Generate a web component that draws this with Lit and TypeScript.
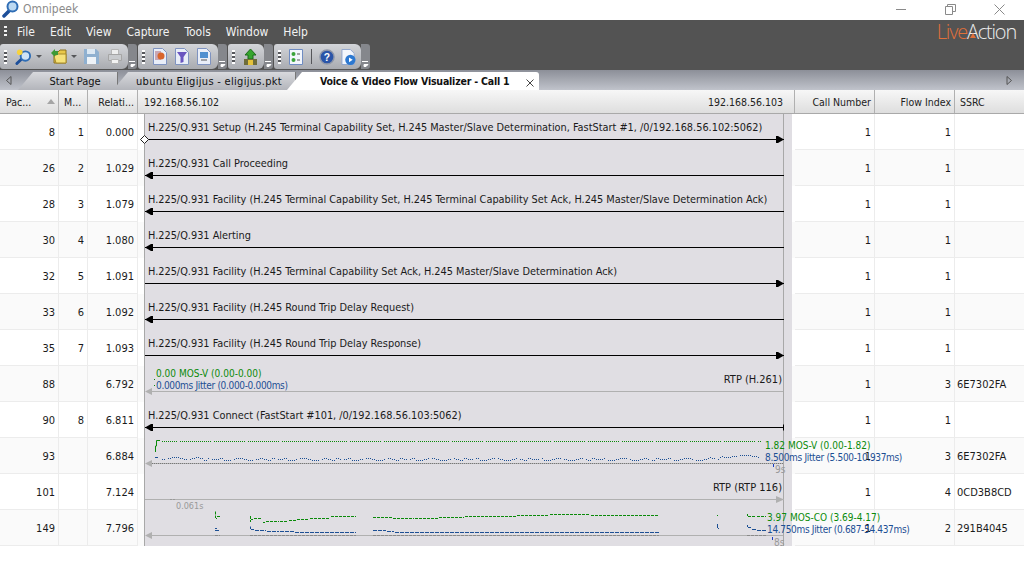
import { LitElement, html, css, svg } from "lit";
import { customElement } from "lit/decorators.js";

type Flow = {
  pkt: number;
  msg?: number;
  rel: string;
  call: string;
  idx: number;
  ssrc?: string;
  label?: string;
  dir?: "right" | "left";
  kind?: "rtp" | "rtpRight" | "chartV" | "chartA";
};

const ROWS: Flow[] = [
  { pkt: 8, msg: 1, rel: "0.000", call: "1", idx: 1, dir: "right", label: "H.225/Q.931 Setup (H.245 Terminal Capability Set, H.245 Master/Slave Determination, FastStart #1, /0/192.168.56.102:5062)" },
  { pkt: 26, msg: 2, rel: "1.029", call: "1", idx: 1, dir: "left", label: "H.225/Q.931 Call Proceeding" },
  { pkt: 28, msg: 3, rel: "1.079", call: "1", idx: 1, dir: "left", label: "H.225/Q.931 Facility (H.245 Terminal Capability Set, H.245 Terminal Capability Set Ack, H.245 Master/Slave Determination Ack)" },
  { pkt: 30, msg: 4, rel: "1.080", call: "1", idx: 1, dir: "left", label: "H.225/Q.931 Alerting" },
  { pkt: 32, msg: 5, rel: "1.091", call: "1", idx: 1, dir: "right", label: "H.225/Q.931 Facility (H.245 Terminal Capability Set Ack, H.245 Master/Slave Determination Ack)" },
  { pkt: 33, msg: 6, rel: "1.092", call: "1", idx: 1, dir: "left", label: "H.225/Q.931 Facility (H.245 Round Trip Delay Request)" },
  { pkt: 35, msg: 7, rel: "1.093", call: "1", idx: 1, dir: "right", label: "H.225/Q.931 Facility (H.245 Round Trip Delay Response)" },
  { pkt: 88, rel: "6.792", call: "1", idx: 3, ssrc: "6E7302FA", kind: "rtp" },
  { pkt: 90, msg: 8, rel: "6.811", call: "1", idx: 1, dir: "left", label: "H.225/Q.931 Connect (FastStart #101, /0/192.168.56.103:5062)" },
  { pkt: 93, rel: "6.884", call: "1", idx: 3, ssrc: "6E7302FA", kind: "chartV" },
  { pkt: 101, rel: "7.124", call: "1", idx: 4, ssrc: "0CD3B8CD", kind: "rtpRight" },
  { pkt: 149, rel: "7.796", call: "1", idx: 2, ssrc: "291B4045", kind: "chartA" },
];

// the wobble of the jitter trace, repeated along the lane
const WOBBLE = [20, 21, 21, 20, 22, 22, 21, 20, 20, 21, 22, 22, 21, 20, 21, 22];

const dottedV = () => {
  let green = "";
  let blue = "";
  for (let x = 18; x < 618; x += 2) {
    if (x % 34 !== 0) green += `M${x} 3.5h1`;
    let by = WOBBLE[(x >> 2) % WOBBLE.length];
    if (x < 60) by -= 1;
    if (x > 585) by = 19 - Math.round(Math.sin((x - 585) / 10) * 2);
    else if (x > 560) by -= Math.round((x - 560) / 12);
    if (x % 22 !== 0) blue += `M${x} ${by + 0.5}h1`;
  }
  return svg`<svg class="chart" width="650" height="36" viewBox="0 0 650 36">
    <path d="M11.5 14V8H12.5V2.5H16" fill="none" stroke="#0a8a0a"/>
    <path d="${green}" stroke="#0a8a0a" fill="none"/>
    <path d="M11 19.5h3" stroke="#1c4f94" fill="none"/>
    <path d="${blue}" stroke="#1c4f94" fill="none"/>
    <path d="M8 25.5H639" stroke="#b5b5b5" fill="none"/>
    <path d="M8 25.5H639" stroke="#777" stroke-dasharray="1 1" fill="none"/>
    <path d="M1 25.5L8 22V29Z" fill="#b0b0b0"/>
    <path d="M629.5 26v3" stroke="#1a3fc4" fill="none"/>
  </svg>`;
};

const GREEN_SEGS = [
  "M71.5 1.5V8M72 8.5H73M73 6.5H76",
  "M106.5 6V12M107 9.5H109M110 8.5H118M119 12.5H121M122 11.5H135M136 11.5H144M145 10.5H152M153 9.5H165M166 8.5H186M187 6.5H212",
  "M229 7.5H248M249 8.5H270M271 8.5H294M295 7.5H320M321 6.5H372M373 5.5H405M406 4.5H446M447 5.5H515",
  "M573.5 5V6M603.5 4V6M604 6.5H612M613 6.5H622",
];
const BLUE_SEGS = [
  "M71 18.5H73M71 20.5H76",
  "M106.5 16.5V19M107 19.5H110M111 20.5H122M123 21.5H135M136 21.5H150M151 22.5H212",
  "M229 20.5H242M243 21.5H250M251 22.5H290M291 22.5H515",
  "M573.5 14V18M574.5 18V19M603.5 15V17M604 17.5H607M608 19.5H612M613 20.5H622",
];

const segsA = () => svg`<svg class="chart" width="650" height="36" viewBox="0 0 650 36">
  <path d="M8 25.5H639" stroke="#b0b0b0" fill="none"/>
  <path d="M1 25.5L8 22V29Z" fill="#b0b0b0"/>
  <path d="M71 25.5H76M106 25.5H212M229 25.5H515M603 25.5H622" stroke="#8a8a8a" stroke-dasharray="3 1" fill="none"/>
  <path d="${GREEN_SEGS.join("")}" stroke="#0a8a0a" stroke-dasharray="3 1" fill="none"/>
  <path d="${BLUE_SEGS.join("")}" stroke="#1c4f94" stroke-dasharray="4 1" fill="none"/>
  <path d="M628.5 27v3" stroke="#1a3fc4" fill="none"/>
</svg>`;

const arrow = (dir?: "right" | "left", first = false, tick = false) => {
  const head =
    dir === "right"
      ? svg`<path d="M632 22V29H634L640 25.5L634 22Z" fill="#000"/>`
      : svg`<path d="M1 25.5L7 22H9V29H7Z" fill="#000"/>`;
  return svg`<svg class="chart" width="650" height="36" viewBox="0 0 650 36">
    <path d="M1 25.5H640" stroke="#000" fill="none"/>
    ${head}
    ${first ? svg`<path d="M-3.5 25.5L0.5 21.5L4.5 25.5L0.5 29.5Z" fill="#fff" stroke="#222"/>` : null}
    ${tick ? svg`<path d="M639.5 22.5V28.5" stroke="#000" fill="none"/>` : null}
  </svg>`;
};

@customElement("app-root")
export class AppRoot extends LitElement {
  static override styles = css`
    :host {
      display: block;
      width: 1024px;
      height: 574px;
      overflow: hidden;
      background: #fff;
      font-family: "DejaVu Sans Condensed", "DejaVu Sans", "Liberation Sans", sans-serif;
      font-stretch: condensed;
      font-size: 11px;
      color: #1a1a1a;
    }
    .title {
      height: 20px;
      display: flex;
      align-items: center;
      background: #fff;
      padding: 0 2px 2px 2px;
      box-sizing: border-box;
      gap: 4px;
      color: #8b8b8b;
      font-size: 12px;
    }
    .title .spacer {
      flex: 1;
    }
    .winbtn {
      width: 45px;
      height: 14px;
      display: flex;
      align-items: center;
      justify-content: center;
    }
    .chrome {
      height: 50px;
      background: #535353;
      display: flex;
      flex-direction: column;
      position: relative;
    }
    .menu {
      height: 24px;
      display: flex;
      align-items: center;
      color: #f2f2f2;
      padding-left: 4px;
    }
    .menu span {
      margin-right: 15px;
      font-size: 12px;
    }
    .menu .grip {
      margin-right: 10px;
      height: 12px;
    }
    .grip {
      width: 3px;
      flex: none;
      background: repeating-linear-gradient(#f2f2f2 0 2px, transparent 2px 4px);
    }
    .logo {
      position: absolute;
      right: 8px;
      top: -2px;
      font-size: 20px;
      letter-spacing: -1.2px;
      font-family: "Open Sans", "Noto Sans", sans-serif;
      font-stretch: normal;
      font-weight: 300;
      color: #ececec;
    }
    .logo b {
      font-weight: 300;
      color: #e0703a;
    }
    .logo-mark {
      position: absolute;
      left: 970px;
      top: 13px;
    }
    .tools {
      display: flex;
      height: 26px;
    }
    .group {
      display: flex;
      align-items: center;
      height: 25px;
      padding-left: 4px;
      border-radius: 3px 6px 6px 3px;
      background: linear-gradient(#d3d5d9, #a9abb0);
      box-sizing: border-box;
    }
    .group .grip {
      height: 14px;
      margin-right: 8px;
      background: repeating-linear-gradient(#fff 0 2px, #55565a 2px 4px);
    }
    .more {
      width: 9px;
      height: 25px;
      margin-right: 1px;
      background: #85878c;
      border-radius: 0 3px 3px 0;
      display: flex;
      align-items: flex-end;
      justify-content: center;
      padding-bottom: 2px;
      box-sizing: border-box;
    }
    .tbtn {
      display: flex;
      align-items: center;
    }
    .drop {
      margin: 0 7px 0 4px;
      width: 0;
      height: 0;
      border: 3px solid transparent;
      border-top: 3px solid #55565a;
      border-bottom: none;
    }
    .sep {
      width: 1px;
      height: 15px;
      background: #55565a;
      margin-right: 7px;
    }
    .gap8 {
      margin-right: 8px;
      flex: none;
    }
    .tabs {
      height: 20px;
      display: flex;
      align-items: flex-end;
      background: linear-gradient(#8c8f98, #c0c3cb);
      position: relative;
      box-sizing: border-box;
    }
    .scroll {
      width: 18px;
      height: 20px;
      display: flex;
      align-items: center;
      padding-left: 6px;
      box-sizing: border-box;
      flex: none;
    }
    .scroll.right {
      margin-left: auto;
      width: 24px;
    }
    .tab {
      height: 18px;
      display: flex;
      align-items: center;
      justify-content: center;
      clip-path: polygon(0 100%, 15px 0, 100% 0, 100% 100%);
      background: linear-gradient(#d8d9dd, #b3b5bb);
      border-right: 1px solid #777;
      box-sizing: border-box;
      color: #111;
    }
    .tab.start {
      width: 100px;
      margin-right: -5px;
      padding-left: 15px;
    }
    .tab.pkt {
      width: 183px;
      margin-right: -9px;
      padding-left: 10px;
      letter-spacing: 0.3px;
    }
    .tab.active {
      width: 252px;
      background: #fff;
      font-weight: 700;
      font-size: 10.5px;
      letter-spacing: -0.2px;
      border: none;
      position: relative;
      justify-content: flex-start;
      padding-left: 33px;
      border-top-right-radius: 3px;
      clip-path: polygon(0 100%, 15px 0, 100% 0, 100% 100%);
    }
    .tab .close {
      position: absolute;
      right: 5px;
      top: 7px;
    }
    .head,
    .row {
      display: grid;
      grid-template-columns: 59px 29px 50px 657px 80px 80px 69px;
    }
    .head {
      height: 24px;
      background: linear-gradient(#f7f7f7, #dedede);
      border-bottom: 1px solid #a9a9a9;
      box-sizing: border-box;
      font-size: 10.5px;
      color: #222;
    }
    .head > div {
      border-right: 1px solid #b0b0b0;
      display: flex;
      align-items: center;
      padding: 0 5px;
      box-sizing: border-box;
      overflow: hidden;
      white-space: nowrap;
    }
    .head > div:last-child {
      border-right: none;
    }
    .head .pac {
      justify-content: space-between;
      padding: 0 3px 0 6px;
    }
    .head .sort {
      width: 0;
      height: 0;
      border: 4.5px solid transparent;
      border-bottom: 5px solid #a5a5a5;
      border-top: none;
    }
    .head .ips {
      justify-content: space-between;
      padding: 0 11px 0 6px;
    }
    .head .end {
      justify-content: flex-end;
      padding-right: 3px;
    }
    .row {
      height: 36px;
      background: #fff;
      box-sizing: border-box;
    }
    .row:nth-child(even) {
      background: #fafafa;
    }
    .row > div {
      border-right: 1px solid #ececec;
      border-bottom: 1px solid #ececec;
      box-sizing: border-box;
      display: flex;
      align-items: center;
      justify-content: flex-end;
      padding: 1px 3px 0 0;
      white-space: nowrap;
    }
    .row > div.ssrc {
      justify-content: flex-start;
      padding-left: 2px;
      border-right: none;
    }
    .row > div.flow {
      display: block;
      padding: 0;
      border: none;
      position: relative;
      background: linear-gradient(
        to right,
        transparent 6px,
        #a8a8a8 6px 7px,
        #e0dee3 7px 645px,
        #a8a8a8 645px 646px,
        #e0dee3 646px 654px,
        transparent 654px
      );
      color: #1a1a1a;
    }
    .flow .msg {
      padding: 6px 0 0 10px;
      line-height: 16px;
      font-size: 10.85px;
      position: relative;
      z-index: 1;
    }
    .chart {
      position: absolute;
      left: 6px;
      top: 0;
      overflow: visible;
    }
    .note {
      position: absolute;
      z-index: 2;
      font-size: 10px;
      line-height: 12px;
      white-space: nowrap;
    }
    .note.tiny {
      font-size: 9px;
    }
    .green {
      color: #0a8a0a;
    }
    .blue {
      color: #1c4f94;
      letter-spacing: -0.33px;
    }
    .gray {
      color: #999;
    }
    .rtp-name {
      position: absolute;
      right: 13px;
      top: 6px;
      z-index: 1;
      line-height: 16px;
    }
    .rows {
      display: flex;
      flex-direction: column;
    }
  `;

  private renderFlow(r: Flow, i: number) {
    if (r.kind === "rtp") {
      return html`<span class="note green" style="left:18px;top:2px">0.00 MOS-V (0.00-0.00)</span>
        <span class="note blue" style="left:18px;top:14px">0.000ms Jitter (0.000-0.000ms)</span>
        <span class="rtp-name">RTP (H.261)</span>
        <svg class="chart" width="650" height="36" viewBox="0 0 650 36">
          <path d="M10.5 13v1M10.5 19v1" stroke="#0a8a0a" fill="none" />
          <path d="M8 25.5H639" stroke="#b0b0b0" fill="none" />
          <path d="M1 25.5L8 22V29Z" fill="#b0b0b0" />
        </svg>`;
    }
    if (r.kind === "rtpRight") {
      return html`<span class="rtp-name">RTP (RTP 116)</span>
        <svg class="chart" width="650" height="36" viewBox="0 0 650 36">
          <path d="M1 25.5H640" stroke="#b0b0b0" fill="none" />
          <path d="M632 22L640 25.5L632 29Z" fill="#b0b0b0" />
          <path d="M26 25.5H31" stroke="#999" stroke-dasharray="2 1" fill="none" />
        </svg>`;
    }
    if (r.kind === "chartV") {
      return html`${dottedV()}
        <span class="note green" style="left:627px;top:2px">1.82 MOS-V (0.00-1.82)</span>
        <span class="note blue" style="left:627px;top:14px">8.500ms Jitter (5.500-10.937ms)</span>
        <span class="note gray" style="left:637px;top:26px">9s</span>`;
    }
    if (r.kind === "chartA") {
      return html`${segsA()}
        <span class="note tiny gray" style="left:38px;top:-10px">0.061s</span>
        <span class="note green" style="left:629px;top:2px">3.97 MOS-CO (3.69-4.17)</span>
        <span class="note blue" style="left:629px;top:14px">14.750ms Jitter (0.687-54.437ms)</span>
        <span class="note gray" style="left:636px;top:27px">8s</span>`;
    }
    return html`<div class="msg">${r.label}</div>
      ${arrow(r.dir, i === 0, i === 8)}`;
  }

  override render() {
    return html`
      <div class="title">
        <svg width="17" height="18" viewBox="0 0 17 18">
          <path d="M2 16L7 11" stroke="#1d4f9a" stroke-width="3.5" stroke-linecap="round" />
          <circle cx="10.5" cy="6.5" r="5" fill="#bcd9f2" stroke="#2f6db5" stroke-width="2" />
        </svg>
        <span>Omnipeek</span>
        <span class="spacer"></span>
        <div class="winbtn">
          <svg width="11" height="11" viewBox="0 0 11 11"><path d="M0 5.5H10" stroke="#8a8a8a" fill="none" /></svg>
        </div>
        <div class="winbtn">
          <svg width="11" height="11" viewBox="0 0 11 11">
            <path d="M.5 2.5h7v8h-7zM2.5 2.5v-2h8v7h-3" stroke="#8a8a8a" fill="none" />
          </svg>
        </div>
        <div class="winbtn">
          <svg width="11" height="11" viewBox="0 0 11 11"><path d="M.5.5l10 10M10.5.5l-10 10" stroke="#8a8a8a" fill="none" /></svg>
        </div>
      </div>
      <div class="chrome">
        <div class="menu">
          <div class="grip"></div>
          <span>File</span><span>Edit</span><span>View</span><span>Capture</span><span>Tools</span
          ><span>Window</span><span>Help</span>
        </div>
        <div class="logo"><b>Live</b>Action</div>
        <svg class="logo-mark" width="6" height="5" viewBox="0 0 6 5"><path d="M3 0L6 5H0Z" fill="#e0703a" /></svg>
        <div class="tools">
          <div class="group" style="width:128px">
            <div class="grip"></div>
            <div class="tbtn">
              <svg width="17" height="18" viewBox="0 0 18 18">
                <path d="M2 16L7 11" stroke="#1d4f9a" stroke-width="3" stroke-linecap="round" />
                <circle cx="11" cy="8" r="5" fill="#cfe3f5" stroke="#2f6db5" stroke-width="2" />
                <circle cx="5" cy="4" r="3" fill="#f7d23c" />
              </svg>
              <i class="drop" style="margin-right:9px"></i>
            </div>
            <div class="tbtn">
              <svg width="16" height="18" viewBox="0 0 16 18">
                <path d="M3 4h4l2-2h6v13H3z" fill="#e9c84a" stroke="#8c7320" />
                <path d="M3 8l4-2h8v9H5z" fill="#f6e27a" stroke="#a88c2a" />
                <path d="M0 5l4-4v2h3v4H4v2z" fill="#3d9a35" />
              </svg>
              <i class="drop"></i>
            </div>
            <svg class="gap8" width="15" height="15" viewBox="0 0 15 15" style="margin-right:9px">
              <path d="M0 0h12l3 3v12H0z" fill="#8fb0d0" />
              <path d="M3 0h8v5H3z" fill="#dce8f3" />
              <path d="M3 8h9v7H3z" fill="#eef3f8" />
            </svg>
            <svg width="14" height="15" viewBox="0 0 14 15">
              <path d="M3.5 .5h7v5h-7z" fill="#eee" stroke="#b5b5b5" />
              <path d="M.5 5.5h13v6H.5z" fill="#c9cbce" stroke="#a5a5a5" />
              <path d="M3.5 10.5h7v4h-7z" fill="#f2f2f2" stroke="#b5b5b5" />
            </svg>
          </div>
          <div class="more">${this.moreIcon()}</div>
          <div class="group" style="width:80px">
            <div class="grip"></div>
            ${this.doc("#d9652c")} ${this.doc("#6a55c0", "filter")} ${this.doc("#4f8fd0", "screen")}
          </div>
          <div class="more">${this.moreIcon()}</div>
          <div class="group" style="width:36px">
            <div class="grip"></div>
            <svg width="15" height="18" viewBox="0 0 15 18">
              <path d="M7.5 1L13 7H10V11H5V7H2z" fill="#37a52e" stroke="#1d6b1a" />
              <path d="M1 11h13v6H1z" fill="#6f6d3a" />
              <path d="M5 12h5v5H5z" fill="#e4c23c" />
            </svg>
          </div>
          <div class="more">${this.moreIcon()}</div>
          <div class="group" style="width:87px">
            <div class="grip"></div>
            <svg class="gap8" width="14" height="16" viewBox="0 0 14 16">
              <path d="M.5 .5h13v15H.5z" fill="#f2f6fc" stroke="#6f8cc2" />
              <circle cx="4.5" cy="5" r="2" fill="#3aa33a" />
              <circle cx="4.5" cy="11" r="2" fill="#3aa33a" />
              <path d="M8 5h3M8 11h3" stroke="#555" />
            </svg>
            <div class="sep"></div>
            <svg class="gap8" width="16" height="16" viewBox="0 0 17 17" style="margin-right:6px">
              <circle cx="8.5" cy="8.5" r="7.5" fill="#2b55a8" stroke="#8f97a8" stroke-width="1.5" />
              <text x="8.5" y="12.5" text-anchor="middle" font-size="11" font-weight="700" fill="#fff" font-family="Liberation Sans">?</text>
            </svg>
            <svg width="15" height="18" viewBox="0 0 16 18">
              <path d="M1 1h9l4 4v12H1z" fill="#f3f6fc" stroke="#8fa4cc" />
              <circle cx="10" cy="12" r="5.5" fill="#2c78d0" />
              <path d="M8.5 9.5L12.5 12L8.5 14.5z" fill="#fff" />
            </svg>
          </div>
          <div class="more">${this.moreIcon()}</div>
        </div>
      </div>
      <div class="tabs">
        <div class="scroll">
          <svg width="6" height="9" viewBox="0 0 6 9"><path d="M5 .5L.5 4.5L5 8.5z" fill="none" stroke="#555" /></svg>
        </div>
        <div class="tab start">Start Page</div>
        <div class="tab pkt">ubuntu Eligijus - eligijus.pkt</div>
        <div class="tab active">
          Voice &amp; Video Flow Visualizer - Call 1
          <svg class="close" width="8" height="8" viewBox="0 0 8 8"><path d="M.5.5l7 7M7.5.5l-7 7" stroke="#444" fill="none" /></svg>
        </div>
        <div class="scroll right">
          <svg width="6" height="9" viewBox="0 0 6 9"><path d="M1 .5L5.5 4.5L1 8.5z" fill="none" stroke="#555" /></svg>
        </div>
      </div>
      <div class="head">
        <div class="pac">Pac... <i class="sort"></i></div>
        <div>M...</div>
        <div class="end">Relati...</div>
        <div class="ips"><span>192.168.56.102</span><span>192.168.56.103</span></div>
        <div class="end">Call Number</div>
        <div class="end">Flow Index</div>
        <div>SSRC</div>
      </div>
      <div class="rows">
        ${ROWS.map(
          (r, i) => html`<div class="row">
            <div>${r.pkt}</div>
            <div>${r.msg ?? ""}</div>
            <div>${r.rel}</div>
            <div class="flow">${this.renderFlow(r, i)}</div>
            <div>${r.call}</div>
            <div>${r.idx}</div>
            <div class="ssrc">${r.ssrc ?? ""}</div>
          </div>`
        )}
      </div>
    `;
  }

  private moreIcon() {
    return html`<svg width="7" height="6" viewBox="0 0 7 6"><path d="M0 .5H6M2 5.5V3.5H6L4 5.5z" stroke="#fff" fill="#fff" stroke-width="1" /></svg>`;
  }

  private doc(color: string, glyph = "") {
    return html`<svg class="gap8" width="14" height="17" viewBox="0 0 14 17">
      <path d="M.5 .5h9l4 4v12H.5z" fill="#e9eef8" stroke="#7f93c0" />
      ${glyph === "filter"
        ? svg`<path d="M2 4h10L8.5 9v5L5.5 15V9z" fill="${color}"/>`
        : glyph === "screen"
          ? svg`<path d="M3 4h8v6H3z" fill="${color}"/><path d="M4 12h6" stroke="#555"/>`
          : svg`<path d="M2 3h6v9H2z" fill="#c9a7b5"/><circle cx="8" cy="8" r="3.5" fill="${color}"/>`}
    </svg>`;
  }
}
